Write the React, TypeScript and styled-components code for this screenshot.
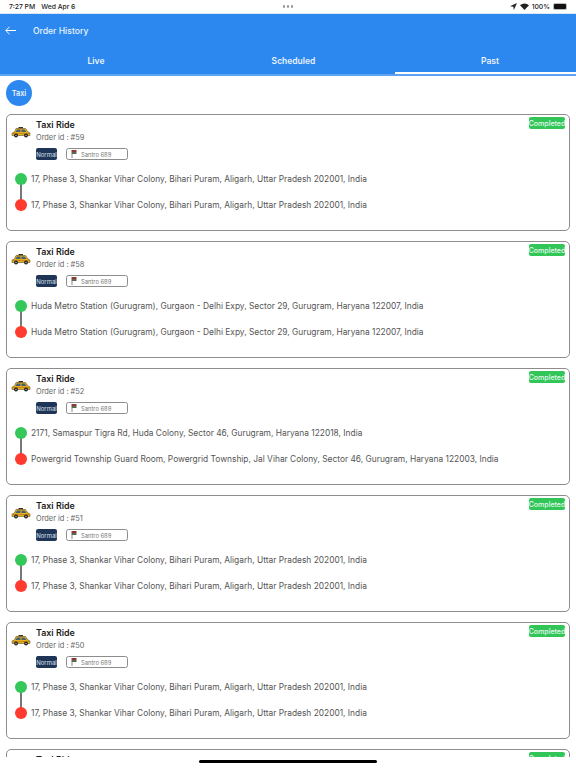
import React from "react";
import styled, { createGlobalStyle } from "styled-components";

const Global = createGlobalStyle`
  html, body { margin: 0; padding: 0; background: #fff; }
  body { font-family: Inter, "Liberation Sans", sans-serif; }
  * { box-sizing: border-box; }
`;
const Page = styled.div`
  width: 576px; height: 768px; display: flex; flex-direction: column; overflow: hidden; background: #fff; position: relative;
`;
const StatusBar = styled.div`
  height: 13px; flex: none; display: grid; grid-template-columns: 1fr auto 1fr; align-items: center; padding: 0 9px 0 9px;
  font-size: 6.8px; font-weight: 500; color: #222;
`;
const StatusLeft = styled.div`display: flex; gap: 6px;`;
const Dots = styled.div`display: flex; gap: 1.5px;`;
const Dot = styled.i`width: 2.5px; height: 2.5px; border-radius: 50%; background: #999; display: block;`;
const StatusRight = styled.div`display: flex; justify-content: flex-end; align-items: center; gap: 3px;`;
const Battery = styled.div`
  width: 14px; height: 7px; border-radius: 2px; background: #111; border: 1px solid #bbb;
`;
const Header = styled.header`
  height: 63px; flex: none; background: #2c87ee; border-top: 1px solid #d8e6f5; display: flex; flex-direction: column; color: #fff;
`;
const TitleRow = styled.div`
  height: 33px; display: flex; align-items: center; padding: 0 0 0 5px; gap: 17px; font-size: 8.6px; font-weight: 500; color: #eaf3fd;
`;
const Tabs = styled.div`display: grid; grid-template-columns: 192px 203px 1fr; flex: 1;`;
const Tab = styled.div<{ $active?: boolean }>`
  display: flex; align-items: center; justify-content: center; font-size: 8.5px; font-weight: 600; color: #eaf3fd;
  padding-top: 3px; padding-left: ${(p) => (p.$active ? "9px" : "0")};
  border-bottom: 2px solid ${(p) => (p.$active ? "#fff" : "transparent")};
`;
const HeaderEdge = styled.div`height: 2px; flex: none; background: #5fa2f2;`;
const FilterRow = styled.div`
  height: 38px; flex: none; padding: 4px 6px 0; display: flex; align-items: flex-start;
`;
const FilterPill = styled.div`
  width: 26px; height: 26px; border-radius: 50%; background: #2c87ee; color: #fff; font-size: 7.4px; font-weight: 500;
  display: flex; align-items: center; justify-content: center;
`;
const List = styled.main`
  flex: 1; min-height: 0; overflow: hidden; padding: 0 6px; display: flex; flex-direction: column; gap: 10px;
`;
const Card = styled.section`
  flex: none; height: 117px; border: 1px solid #8d8d8d; border-radius: 5px; padding: 3px 5px 0 4px; position: relative; background: #fff;
`;
const Badge = styled.div`
  position: absolute; top: 2px; right: 4px; width: 36px; height: 12px; border-radius: 2px; background: #32c659; color: #e8f8ec;
  font-size: 7px; font-weight: 500; display: flex; align-items: center; justify-content: center;
`;
const Top = styled.div`display: flex; gap: 4px;`;
const TaxiBox = styled.div`width: 21px; flex: none; padding-top: 8px; display: flex; align-items: flex-start;`;
const Info = styled.div`display: flex; flex-direction: column;`;
const Title = styled.div`font-size: 8.9px; font-weight: 600; color: #1c1c1c; height: 13px; line-height: 13px;`;
const OrderId = styled.div`font-size: 7.4px; color: #666; height: 13px; line-height: 13px;`;
const Tags = styled.div`display: flex; gap: 9px; margin-top: 4px;`;
const Normal = styled.div`
  width: 21px; height: 12px; background: #1f3557; color: #dde3ec; border-radius: 2px; font-size: 6px; display: flex; align-items: center; justify-content: center;
`;
const Vehicle = styled.div`
  width: 62px; height: 12px; border: 1px solid #8c8c8c; border-radius: 2.5px; display: flex; align-items: center; gap: 4px; padding-left: 4px;
  font-size: 5.8px; color: #777;
`;
const Route = styled.div`
  margin: 12px 0 0 4px; position: relative; display: flex; flex-direction: column; gap: 13px;
`;
const Connector = styled.div`
  position: absolute; left: 5px; top: 7px; width: 1.5px; height: 24px; background: #777;
`;
const Stop = styled.div`display: flex; align-items: center; gap: 4px; height: 13px;`;
const Marker = styled.span<{ $c: string }>`
  width: 12px; height: 12px; border-radius: 50%; background: ${(p) => p.$c}; flex: none; position: relative;
`;
const Addr = styled.span`font-size: 8.38px; color: #555; white-space: nowrap;`;
const Footer = styled.footer`
  height: 11px; flex: none; background: #fff; display: flex; justify-content: center; padding-top: 3px;
`;
const HomeBar = styled.div`width: 178px; height: 3px; border-radius: 2px; background: #000;`;

const TaxiIcon = () => (
  <svg width="20" height="12" viewBox="0 0 40 24">
    <path d="M15 2h9v3h-9z" fill="#3a3015" />
    <path d="M10 5h19l5 7 4 2v5H2v-5l5-2z" fill="#e8ae1e" stroke="#4a3a10" strokeWidth="1" />
    <path d="M12 7h7v5H9zM21 7h6l4 5H21z" fill="#47606e" />
    <path d="M3 14h34v2H3z" fill="#c68a10" />
    <circle cx="10" cy="19" r="4" fill="#222" /><circle cx="30" cy="19" r="4" fill="#222" />
    <circle cx="10" cy="19" r="1.6" fill="#aaa" /><circle cx="30" cy="19" r="1.6" fill="#aaa" />
  </svg>
);
const FlagIcon = () => (
  <svg width="6" height="8" viewBox="0 0 6 8"><path d="M0.5 0h5v2h-5z" fill="#8a3a30" /><path d="M0.5 2h5v2h-5z" fill="#5a6a50" /><path d="M0.5 4h1v4h-1z" fill="#888" /></svg>
);
const shankar = "17, Phase 3, Shankar Vihar Colony, Bihari Puram, Aligarh, Uttar Pradesh 202001, India";
const huda = "Huda Metro Station (Gurugram), Gurgaon - Delhi Expy, Sector 29, Gurugram, Haryana 122007, India";
const orders = [
  { id: 59, a: shankar, b: shankar },
  { id: 58, a: huda, b: huda },
  { id: 52, a: "2171, Samaspur Tigra Rd, Huda Colony, Sector 46, Gurugram, Haryana 122018, India", b: "Powergrid Township Guard Room, Powergrid Township, Jal Vihar Colony, Sector 46, Gurugram, Haryana 122003, India" },
  { id: 51, a: shankar, b: shankar },
  { id: 50, a: shankar, b: shankar },
  { id: 49, a: shankar, b: shankar },
];

export default function App() {
  return (
    <Page>
      <Global />
      <StatusBar>
        <StatusLeft><span>7:27 PM</span><span>Wed Apr 6</span></StatusLeft>
        <Dots><Dot /><Dot /><Dot /></Dots>
        <StatusRight>
          <svg width="7" height="7" viewBox="0 0 10 10"><path d="M10 0 0 4.5 4.8 5.2 5.5 10z" fill="#222" /></svg>
          <svg width="9" height="7" viewBox="0 0 18 14"><path d="M9 14 0 4.5a13 13 0 0 1 18 0z" fill="#222" /></svg>
          <span>100%</span>
          <Battery />
        </StatusRight>
      </StatusBar>
      <Header>
        <TitleRow>
          <svg width="11" height="9" viewBox="0 0 11 9" fill="none" stroke="#fff" strokeWidth="1"><path d="M11 4.5H.8M4.5.8.8 4.5l3.7 3.7" /></svg>
          <span>Order History</span>
        </TitleRow>
        <Tabs><Tab>Live</Tab><Tab>Scheduled</Tab><Tab $active>Past</Tab></Tabs>
        <HeaderEdge />
      </Header>
      <FilterRow><FilterPill>Taxi</FilterPill></FilterRow>
      <List>
        {orders.map((o) => (
          <Card key={o.id}>
            <Badge>Completed</Badge>
            <Top>
              <TaxiBox><TaxiIcon /></TaxiBox>
              <Info>
                <Title>Taxi Ride</Title>
                <OrderId>Order id : #{o.id}</OrderId>
                <Tags>
                  <Normal>Normal</Normal>
                  <Vehicle><FlagIcon />Santro 689</Vehicle>
                </Tags>
              </Info>
            </Top>
            <Route>
              <Connector />
              <Stop><Marker $c="#34c759" /><Addr>{o.a}</Addr></Stop>
              <Stop><Marker $c="#ff3b30" /><Addr>{o.b}</Addr></Stop>
            </Route>
          </Card>
        ))}
      </List>
      <Footer><HomeBar /></Footer>
    </Page>
  );
}
